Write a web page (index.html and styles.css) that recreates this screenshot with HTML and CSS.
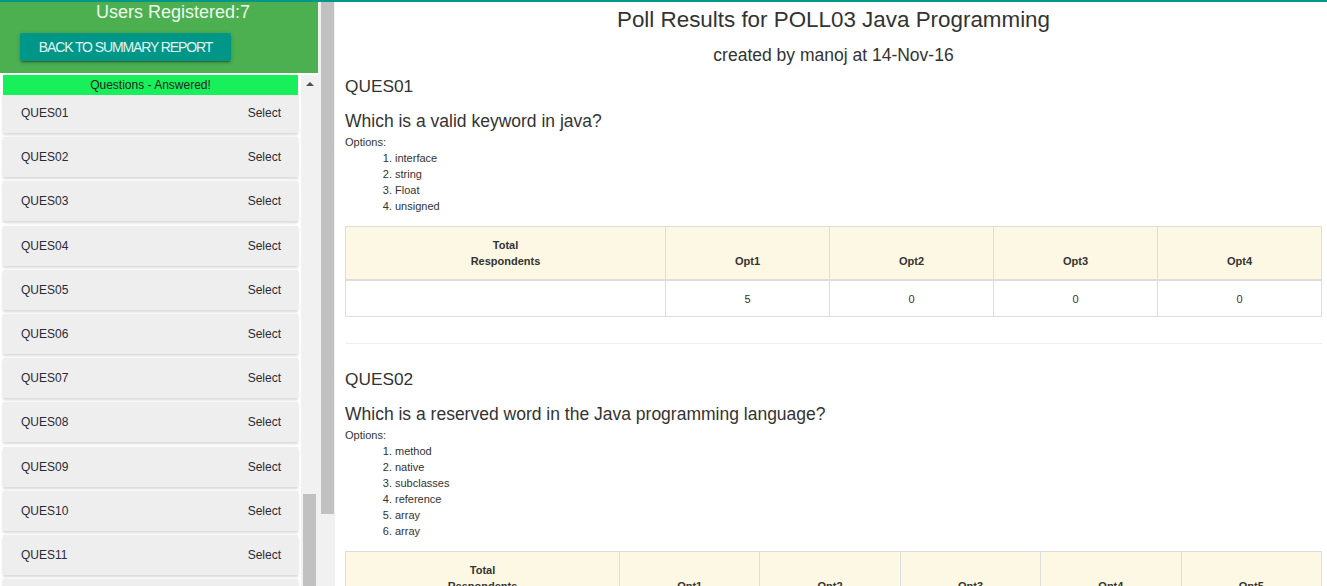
FILE: index.html
```html
<!DOCTYPE html>
<html lang="en">
<head>
<meta charset="utf-8">
<title>Poll Results</title>
<link rel="stylesheet" href="styles.css">
</head>
<body>
<div class="topline"></div>
<div class="page">
  <aside class="sidebar">
    <div class="side-content">
      <div class="side-head">
        <div class="users">Users Registered:7</div>
        <a class="btn-back">BACK TO SUMMARY REPORT</a>
      </div>
      <div class="qpanel">
        <div class="qlist">
          <div class="qbar">Questions - Answered!</div>
          <div class="qcard"><span>QUES01</span><span>Select</span></div>
          <div class="qcard"><span>QUES02</span><span>Select</span></div>
          <div class="qcard"><span>QUES03</span><span>Select</span></div>
          <div class="qcard"><span>QUES04</span><span>Select</span></div>
          <div class="qcard"><span>QUES05</span><span>Select</span></div>
          <div class="qcard"><span>QUES06</span><span>Select</span></div>
          <div class="qcard"><span>QUES07</span><span>Select</span></div>
          <div class="qcard"><span>QUES08</span><span>Select</span></div>
          <div class="qcard"><span>QUES09</span><span>Select</span></div>
          <div class="qcard"><span>QUES10</span><span>Select</span></div>
          <div class="qcard"><span>QUES11</span><span>Select</span></div>
          <div class="qcard"><span>QUES12</span><span>Select</span></div>
        </div>
        <div class="vscroll inner">
          <div class="arrow"><span class="tri"></span></div>
          <div class="track-space"></div>
          <div class="thumb inner-thumb"></div>
        </div>
      </div>
    </div>
    <div class="vscroll outer">
      <div class="thumb outer-thumb"></div>
    </div>
  </aside>

  <main class="main">
    <h1 class="title">Poll Results for POLL03 Java Programming</h1>
    <h2 class="subtitle">created by manoj at 14-Nov-16</h2>

    <section class="q">
      <h3 class="qid">QUES01</h3>
      <h4 class="qtext">Which is a valid keyword in java?</h4>
      <div class="opts-label">Options:</div>
      <ol class="opts">
        <li>interface</li>
        <li>string</li>
        <li>Float</li>
        <li>unsigned</li>
      </ol>
      <table class="results">
        <colgroup><col class="c-total4"><col><col><col><col></colgroup>
        <thead>
          <tr><th>Total<br>Respondents</th><th>Opt1</th><th>Opt2</th><th>Opt3</th><th>Opt4</th></tr>
        </thead>
        <tbody>
          <tr><td></td><td>5</td><td>0</td><td>0</td><td>0</td></tr>
        </tbody>
      </table>
    </section>

    <hr class="sep">

    <section class="q">
      <h3 class="qid">QUES02</h3>
      <h4 class="qtext">Which is a reserved word in the Java programming language?</h4>
      <div class="opts-label">Options:</div>
      <ol class="opts">
        <li>method</li>
        <li>native</li>
        <li>subclasses</li>
        <li>reference</li>
        <li>array</li>
        <li>array</li>
      </ol>
      <table class="results">
        <colgroup><col class="c-total5"><col><col><col><col><col></colgroup>
        <thead>
          <tr><th>Total<br>Respondents</th><th>Opt1</th><th>Opt2</th><th>Opt3</th><th>Opt4</th><th>Opt5</th></tr>
        </thead>
        <tbody>
          <tr><td></td><td>0</td><td>0</td><td>0</td><td>0</td><td>0</td></tr>
        </tbody>
      </table>
    </section>
  </main>
</div>
</body>
</html>
```

FILE: styles.css
```css
* { box-sizing: border-box; }

html, body {
  margin: 0;
  height: 586px;
  overflow: hidden;
  background: #fff;
  font-family: "Liberation Sans", Arial, sans-serif;
  color: #333;
}

.topline {
  height: 2px;
  background: #009688;
}

.page {
  display: grid;
  grid-template-columns: 335px 1fr;
  height: 584px;
  overflow: hidden;
}

/* ---------- sidebar ---------- */
.sidebar {
  display: flex;
  overflow: hidden;
}

.side-content {
  width: 318px;
  display: flex;
  flex-direction: column;
}

.side-head {
  background: #4caf50;
  height: 71px;
  flex-shrink: 0;
}

.users {
  font-size: 18px;
  line-height: 20px;
  color: #eef7ee;
  padding-left: 96px;
}

.btn-back {
  display: block;
  width: 211px;
  height: 28px;
  margin: 11px 0 0 20px;
  background: #009688;
  color: #e3f4f2;
  font-size: 14px;
  line-height: 28px;
  letter-spacing: -1.1px;
  text-align: center;
  border-radius: 2px;
  box-shadow: 0 2px 2px 0 rgba(0,0,0,.14), 0 1px 5px 0 rgba(0,0,0,.12), 0 3px 1px -2px rgba(0,0,0,.2);
}

.qpanel {
  flex: 1;
  display: flex;
  padding-top: 2px;
  background: #fff;
  overflow: hidden;
}

.qlist {
  width: 301px;
}

.qbar {
  position: relative;
  z-index: 1;
  height: 20px;
  margin: 0 3px -2px;
  background: #17ef5b;
  font-size: 12px;
  line-height: 20px;
  text-align: center;
  color: #222;
}

.qcard {
  height: 40px;
  margin: 0 3px 4.2px;
  padding: 0 17px 0 18px;
  background: #eee;
  display: flex;
  justify-content: space-between;
  align-items: center;
  font-size: 12px;
  color: #2a2a35;
  box-shadow: 0 2px 2px 0 rgba(0,0,0,.10), 0 1px 4px 0 rgba(0,0,0,.08);
}

.vscroll {
  width: 17px;
  background: #f1f1f1;
  display: flex;
  flex-direction: column;
}

.vscroll > * {
  flex-shrink: 0;
}

.vscroll.inner {
  padding: 0 2px;
}

.arrow {
  height: 17px;
  display: flex;
  justify-content: center;
  align-items: center;
}

.tri {
  width: 0;
  height: 0;
  border-left: 4px solid transparent;
  border-right: 4px solid transparent;
  border-bottom: 4px solid #505050;
}

.track-space {
  height: 402px;
}

.thumb {
  background: #c1c1c1;
}

.inner-thumb {
  height: 110px;
}

.vscroll.outer {
  padding-left: 3px;
  padding-right: 1px;
  height: 584px;
}

.outer-thumb {
  height: 512px;
}

/* ---------- main ---------- */
.main {
  padding: 0 5px 0 10px;
  overflow: hidden;
}

.title {
  margin: 0;
  font-size: 22.4px;
  font-weight: normal;
  line-height: 36px;
  text-align: center;
}

.subtitle {
  margin: 2px 0 0;
  font-size: 17.5px;
  font-weight: normal;
  line-height: 30px;
  text-align: center;
}

.qid {
  margin: 4px 0 0;
  font-size: 17.3px;
  font-weight: normal;
  line-height: 24px;
}

.qtext {
  margin: 10px 0 0;
  font-size: 17.5px;
  font-weight: normal;
  line-height: 26px;
}

.opts-label {
  font-size: 11px;
  line-height: 16px;
}

.opts {
  margin: 0;
  padding-left: 50px;
  font-size: 11px;
  line-height: 16px;
}

.results {
  margin-top: 12px;
  width: 100%;
  border-collapse: collapse;
  border: 1px solid #ddd;
  font-size: 11px;
  table-layout: fixed;
}

.c-total4 { width: 320px; }
.c-total5 { width: 274px; }

.results th {
  background: #fcf8e3;
  border: 1px solid #ddd;
  border-bottom: 2px solid #ddd;
  padding: 10px 8px;
  line-height: 16px;
  font-weight: bold;
  text-align: center;
  vertical-align: bottom;
}

.results td {
  border: 1px solid #ddd;
  padding: 10px 8px 9px;
  line-height: 16px;
  text-align: center;
}

.sep {
  margin: 26px 0 23px;
  border: 0;
  border-top: 1px solid #eee;
  height: 0;
}
```
